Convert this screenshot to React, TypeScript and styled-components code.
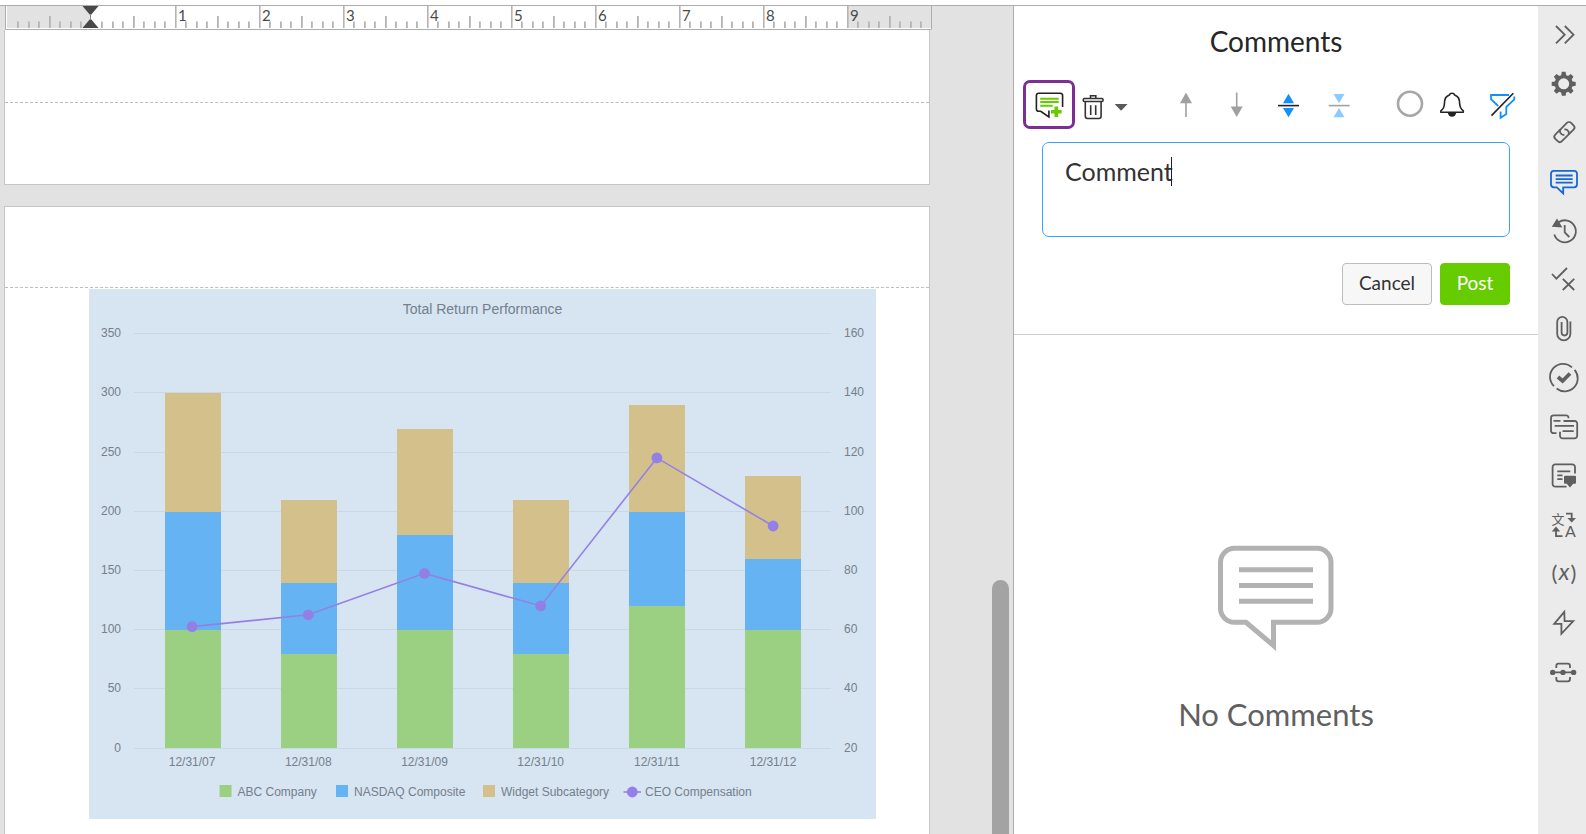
import React from "react";
import styled, { createGlobalStyle } from "styled-components";

const GlobalStyle = createGlobalStyle`
  * { box-sizing: border-box; }
  body {
    margin: 0;
    background: #fff;
    font-family: Lato, "Noto Sans CJK SC", sans-serif;
    color: #333;
  }
  button { font: inherit; color: inherit; }
`;

const Shell = styled.div`
  display: flex;
  height: 100vh;
  padding-top: 5px;
  overflow: hidden;
`;

const Workspace = styled.div`
  flex: 1;
  display: flex;
  min-width: 0;
  border-top: 1px solid #adadad;
  background: #e2e2e2;
`;

const Document = styled.main`
  flex: 1;
  min-width: 0;
  display: flex;
  flex-direction: column;
  padding-left: 4px;
  overflow: hidden;
`;

const RulerBar = styled.svg`
  flex: none;
  display: block;
  width: 927px;
  height: 24px;
  margin-left: 1px;
`;

const Sheet = styled.section<{ $fill?: boolean }>`
  flex: ${(p) => (p.$fill ? "1 0 auto" : "none")};
  width: 926px;
  background: #fff;
  border: 1px solid #c6c6c6;
  border-width: ${(p) => (p.$fill ? "1px 1px 0" : "0 1px 1px")};
  margin-bottom: ${(p) => (p.$fill ? "0" : "21px")};
`;

const Margin = styled.div<{ $h: number; $rule?: boolean }>`
  height: ${(p) => p.$h}px;
  border-bottom: ${(p) => (p.$rule ? "1px dashed #bdbdbd" : "none")};
`;

const Figure = styled.figure`
  margin: 1px 0 0 84px;
  width: 787px;
  background: #d7e4f1;
  svg { display: block; }
`;

const Track = styled.div`
  flex: none;
  width: 21px;
  padding: 574px 4px 0 0;
  display: flex;
`;

const Thumb = styled.div`
  flex: 1;
  background: #a3a3a3;
  border-radius: 9px 9px 0 0;
`;

const Panel = styled.aside`
  flex: none;
  width: 525px;
  display: flex;
  flex-direction: column;
  border-top: 1px solid #adadad;
  border-left: 1px solid #adadad;
  background: #fff;
`;

const PanelTitle = styled.h1`
  margin: 0;
  padding: 17px 0 21px;
  font-size: 28px;
  line-height: 36px;
  font-weight: 400;
  text-align: center;
  color: #262626;
`;

const Toolbar = styled.div`
  display: flex;
  justify-content: space-between;
  height: 49px;
  padding: 0 20px 0 9px;
`;

const ToolGroup = styled.div<{ $gap: number }>`
  display: flex;
  gap: ${(p) => p.$gap}px;
`;

const ToolButton = styled.button<{ $w?: number; $active?: boolean }>`
  width: ${(p) => p.$w ?? 32}px;
  height: 49px;
  padding: 0;
  background: none;
  border: ${(p) => (p.$active ? "3px solid #7b2e94" : "none")};
  border-radius: 7px;
  svg { display: block; }
`;

const Composer = styled.form`
  padding: 13px 28px 29px;
  border-bottom: 1px solid #cecece;
`;

const Field = styled.div`
  position: relative;
  height: 95px;
`;

const CommentInput = styled.textarea`
  display: block;
  width: 100%;
  height: 95px;
  padding: 13px 22px;
  border: 1px solid #36a3ff;
  border-radius: 7px;
  outline: none;
  resize: none;
  background: #fff;
  color: #333;
  font: 25px/30px Lato, sans-serif;
`;

const Caret = styled.span`
  position: absolute;
  left: 129px;
  top: 15px;
  width: 1px;
  height: 29px;
  background: #222;
`;

const Actions = styled.div`
  display: flex;
  justify-content: flex-end;
  gap: 8px;
  margin-top: 26px;
`;

const ActionButton = styled.button<{ $primary?: boolean }>`
  width: ${(p) => (p.$primary ? 70 : 90)}px;
  height: 42px;
  padding: 0 0 2px;
  border: 1px solid ${(p) => (p.$primary ? "#66cc00" : "#bdbdbd")};
  border-radius: 4px;
  background: ${(p) => (p.$primary ? "#66cc00" : "#f7f7f7")};
  color: ${(p) => (p.$primary ? "#fff" : "#333")};
  font-size: 19px;
  line-height: 24px;
`;

const Empty = styled.div`
  flex: 1;
  display: flex;
  flex-direction: column;
  align-items: center;
  padding-top: 210px;
`;

const EmptyText = styled.p`
  margin: 42px 0 0;
  font-size: 31px;
  line-height: 40px;
  color: #606060;
`;

const Rail = styled.nav`
  flex: none;
  width: 48px;
  padding-top: 5px;
  border-top: 1px solid #adadad;
  background: #ebebeb;
  display: flex;
  flex-direction: column;
`;

const RailButton = styled.button<{ $active?: boolean }>`
  height: 49px;
  padding: 0;
  border: 0;
  background: none;
  color: ${(p) => (p.$active ? "#1769d2" : "#5f5f5f")};
  svg { display: block; }
`;

/* ---------- ruler ---------- */

const UNIT = 84;
const ORIGIN = 86;

function Ruler() {
  const ticks: React.ReactNode[] = [];
  for (let n = -7; n <= 79; n++) {
    if (n === 0) continue;
    const major = n % 8 === 0;
    const half = n % 4 === 0;
    const y = major ? 0 : half ? 10 : 15.5;
    ticks.push(
      <rect
        key={n}
        x={Math.floor(ORIGIN + (n * UNIT) / 8)}
        y={y}
        width={major ? 1.6 : 1.8}
        height={22 - y}
        fill="#b4b4b4"
      />
    );
  }
  return (
    <RulerBar viewBox="0 0 927 24" role="img" aria-label="Ruler">
      <rect width="927" height="24" fill="#fff" />
      <rect x="2" y="0" width="84" height="22" fill="#e2e2e2" />
      <rect x="842" y="0" width="84" height="22" fill="#e2e2e2" />
      {ticks}
      {[1, 2, 3, 4, 5, 6, 7, 8, 9].map((n) => (
        <text key={n} x={ORIGIN + n * UNIT + 3} y="15" fontSize="15" fill="#4a4a4a">
          {n}
        </text>
      ))}
      <path d="M77.500 0H93.500L85.500 9.500ZM77.500 22H93.500L85.500 12.500Z" fill="#484848" />
      <path d="M85.500 8V14" stroke="#888" />
      <path d="M0.500 0V23.500H926.500V0" fill="none" stroke="#adadad" />
    </RulerBar>
  );
}

/* ---------- chart ---------- */

const BASE = 459;
const STEP = 59.2;
const COL = 116.2;
const LEFT = 45;

const series = [
  { label: "12/31/07", stack: [100, 100, 100], ceo: 61 },
  { label: "12/31/08", stack: [80, 60, 70], ceo: 65 },
  { label: "12/31/09", stack: [100, 80, 90], ceo: 79 },
  { label: "12/31/10", stack: [80, 60, 70], ceo: 68 },
  { label: "12/31/11", stack: [120, 80, 90], ceo: 118 },
  { label: "12/31/12", stack: [100, 60, 70], ceo: 95 },
];
const fills = ["#9bd083", "#65b3f2", "#d4c08a"];
const legend = [
  { name: "ABC Company", x: 130.5 },
  { name: "NASDAQ Composite", x: 247 },
  { name: "Widget Subcategory", x: 394 },
];

function Chart() {
  const yOf = (v: number) => BASE - (v * STEP) / 50;
  const pts = series.map((s, i) => [LEFT + COL / 2 + i * COL, BASE - ((s.ceo - 20) * STEP) / 20]);
  return (
    <svg width="787" height="530" viewBox="0 0 787 530" fontFamily='"Liberation Sans", Arial, sans-serif' fontSize="12" fill="#74808c" role="img" aria-label="Total Return Performance">
      <text x="393.500" y="25" fontSize="14" textAnchor="middle">Total Return Performance</text>
      {[0, 1, 2, 3, 4, 5, 6, 7].map((k) => {
        const y = Math.floor(BASE - k * STEP);
        return (
          <g key={k}>
            <path d={`M${LEFT} ${y + 0.5}H742`} stroke="#cad8e5" />
            <text x="32" y={y + 4} textAnchor="end">{k * 50}</text>
            <text x="755" y={y + 4}>{20 + k * 20}</text>
          </g>
        );
      })}
      {series.map((s, i) => {
        let acc = 0;
        return (
          <g key={s.label}>
            {s.stack.map((v, j) => {
              const y0 = Math.ceil(yOf(acc));
              acc += v;
              const y1 = Math.ceil(yOf(acc));
              return <rect key={j} x={76 + i * 116} y={y1} width="56" height={y0 - y1} fill={fills[j]} />;
            })}
            <text x={pts[i][0]} y="477" textAnchor="middle">{s.label}</text>
          </g>
        );
      })}
      <polyline points={pts.map((p) => p.join(",")).join(" ")} fill="none" stroke="#9380e6" strokeWidth="1.6" />
      {pts.map((p, i) => (
        <circle key={i} cx={p[0]} cy={p[1]} r="5.400" fill="#9380e6" />
      ))}
      {legend.map((l, i) => (
        <g key={l.name}>
          <rect x={l.x} y="496" width="12" height="12" fill={fills[i]} />
          <text x={l.x + 18} y="507">{l.name}</text>
        </g>
      ))}
      <path d="M534.500 503H552" stroke="#9380e6" strokeWidth="1.600" />
      <circle cx="543.300" cy="503" r="5.400" fill="#9380e6" />
      <text x="556" y="507">CEO Compensation</text>
    </svg>
  );
}

/* ---------- rail icons, drawn on a 48 x 49 cell ---------- */

const gearTeeth = [0, 45, 90, 135, 180, 225, 270, 315];

const railItems: { name: string; active?: boolean; art: React.ReactNode }[] = [
  { name: "Collapse panel", art: <path d="M18 15L26.700 23.700L18 32.400M26.800 15L35.500 23.700L26.800 32.400" /> },
  {
    name: "Settings",
    art: (
      <g transform="translate(25.700 23.800)">
        <circle r="7.300" strokeWidth="3.600" />
        {gearTeeth.map((a) => (
          <path key={a} d="M-2.600 -8L-1.900 -12H1.900L2.600 -8Z" transform={`rotate(${a})`} fill="currentColor" stroke="none" />
        ))}
      </g>
    ),
  },
  {
    name: "Links",
    art: (
      <g transform="translate(26.400 23.100) rotate(-45)">
        <path d="M-1 -4.700H-8.200A3 3 0 0 0 -11.200 -1.700V1.700A3 3 0 0 0 -8.200 4.700H0.400A3 3 0 0 0 3.400 1.700V0.200A2.600 2.600 0 0 0 1.800 -1.800" />
        <path d="M1 4.700H8.200A3 3 0 0 0 11.200 1.700V-1.700A3 3 0 0 0 8.200 -4.700H-0.400A3 3 0 0 0 -3.400 -1.700V-0.200A2.600 2.600 0 0 0 -1.800 1.800" />
      </g>
    ),
  },
  {
    name: "Comments",
    active: true,
    art: (
      <path d="M16 12.800H36A3 3 0 0 1 39 15.800V26.300A3 3 0 0 1 36 29.300H25.200V35.500L18.800 29.300H16A3 3 0 0 1 13 26.300V15.800A3 3 0 0 1 16 12.800ZM17.700 17.500H34.700M17.700 21.100H34.700M17.700 24.700H34.700" />
    ),
  },
  {
    name: "History",
    art: (
      <>
        <path d="M20.500 15.300A11 11 0 1 1 16.300 27.500M26.700 18V25.300L31.300 30" />
        <path d="M19 11.500L24.400 20.400L13.800 19.700Z" fill="currentColor" stroke="none" />
      </>
    ),
  },
  { name: "Review", art: <path d="M14 18L18.400 22.600L29 12M24.800 22.800L36.200 34M36.200 22.800L24.800 34" /> },
  {
    name: "Attachments",
    art: <path d="M32.400 16.500V28.700A6.600 6.600 0 0 1 19.200 28.700V17A5.100 5.100 0 0 1 29.400 17V27.600A2.900 2.900 0 0 1 23.600 27.600V17" />,
  },
  {
    name: "Certify",
    art: (
      <>
        <path d="M34 13.400A13 13 0 0 0 16 32.200M18.600 34.500A13 13 0 0 0 36.600 15.900" />
        <path d="M20 23L24.600 27L32 19.500" strokeWidth="3.800" />
      </>
    ),
  },
  {
    name: "Linked text",
    art: (
      <path d="M30.500 15.200V14.500A2.500 2.500 0 0 0 28 12.300H15.600A2.500 2.500 0 0 0 13 14.800V27.700A2.500 2.500 0 0 0 15.600 30.200H18.500M25.500 18H36.500A2.600 2.600 0 0 1 39.200 20.600V32.700A2.600 2.600 0 0 1 36.500 35.300H24.600A2.600 2.600 0 0 1 22 32.700V28.700M15.500 17.900H22.500M16.700 22.900H36M24.500 28.100H35.700" />
    ),
  },
  {
    name: "Notes",
    art: (
      <>
        <path d="M37 21.500V15A2.700 2.700 0 0 0 34.300 12.300H17.300A2.700 2.700 0 0 0 14.600 15V32A2.700 2.700 0 0 0 17.300 34.700H28.500M19.300 19.300H32.300M19.300 23.300H24.500M19.300 27.100H24.500" />
        <path d="M27 23.700H37A1 1 0 0 1 38 24.700V30.700A1 1 0 0 1 37 31.700H35.200L32 35.400L28.800 31.700H27A1 1 0 0 1 26 30.700V24.700A1 1 0 0 1 27 23.700Z" fill="currentColor" stroke="none" />
      </>
    ),
  },
  {
    name: "Translate",
    art: (
      <>
        <g fill="currentColor" stroke="none">
          <text x="13.500" y="23" fontSize="13" fontFamily="'Noto Sans CJK SC', sans-serif">文</text>
          <text x="27" y="36" fontSize="16" fontFamily="Lato, sans-serif">A</text>
          <path d="M29.400 17H38L33.700 21.600ZM13.800 30.400H22.200L18 25.600Z" />
        </g>
        <path d="M28 12.600H33.700V18M18 29.500V35.200H24.500" />
      </>
    ),
  },
  {
    name: "Variables",
    art: (
      <g fill="currentColor" stroke="none" fontFamily="Lato, sans-serif" textAnchor="middle">
        <text x="16.500" y="30.500" fontSize="22">(</text>
        <text x="26" y="30" fontSize="23" fontStyle="italic">x</text>
        <text x="35.500" y="30.500" fontSize="22">)</text>
      </g>
    ),
  },
  { name: "Actions", art: <path d="M26.300 12.800L16.200 24.800H23.400V34.800L35.200 22.200H26.600Z" /> },
  {
    name: "Section break",
    art: (
      <>
        <path d="M14.700 24.400H36M18.300 20V18A2.300 2.300 0 0 1 20.600 15.700H29.700A2.300 2.300 0 0 1 32 18V20M18.300 29V31A2.300 2.300 0 0 0 20.600 33.300H29.700A2.300 2.300 0 0 0 32 31V29" />
        <g fill="currentColor" stroke="none">
          <circle cx="14.700" cy="24.400" r="2.700" />
          <circle cx="25" cy="24.400" r="2.700" />
          <circle cx="35.600" cy="24.400" r="2.700" />
        </g>
      </>
    ),
  },
];

/* ---------- toolbar icons ---------- */

const Glyph = ({ w = 32, h = 49, children }: { w?: number; h?: number; children: React.ReactNode }) => (
  <svg width={w} height={h} viewBox={`0 0 ${w} ${h}`} fill="none" aria-hidden="true">
    {children}
  </svg>
);

function CommentTools() {
  return (
    <Toolbar role="toolbar" aria-label="Comment tools">
      <ToolGroup $gap={0}>
        <ToolButton $w={52} $active aria-label="Add comment">
          <Glyph w={46} h={43}>
            <path d="M36.600 24V12.400A2.200 2.200 0 0 0 34.400 10.200H12.600A2.200 2.200 0 0 0 10.400 12.400V26A2.200 2.200 0 0 0 12.600 28.300H14.700L22.900 34V27.500" stroke="#222" strokeWidth="1.600" />
            <path d="M14.200 15.700H32.700M14.200 19.100H32.700M14.200 22.700H26.700" stroke="#66cc00" strokeWidth="2" />
            <path d="M30.300 23.500V34M25 28.700H35.600" stroke="#66cc00" strokeWidth="3.600" />
          </Glyph>
        </ToolButton>
        <ToolButton $w={34} aria-label="Delete comment">
          <Glyph w={34}>
            <path d="M9.300 18.500H27A1 1 0 0 1 28 19.500V20.500A1 1 0 0 1 27 21.500H9.300A1 1 0 0 1 8.300 20.500V19.500A1 1 0 0 1 9.300 18.500ZM15.500 18.500V15.700H20.800V18.500M10.300 21.500V36.300A2.200 2.200 0 0 0 12.500 38.500H23.900A2.200 2.200 0 0 0 26.100 36.300V21.500M15.700 25.300V35M20.700 25.300V35" stroke="#333" strokeWidth="1.600" />
          </Glyph>
        </ToolButton>
        <ToolButton $w={22} aria-label="Delete options">
          <Glyph w={22}>
            <path d="M5.600 24H18.600L12.100 30.800Z" fill="#5a5a5a" />
          </Glyph>
        </ToolButton>
      </ToolGroup>
      <ToolGroup $gap={19}>
        <ToolButton aria-label="Previous comment">
          <Glyph>
            <path d="M16 12.500L22 23.300H10Z" fill="#a0a0a0" />
            <path d="M16 20V37" stroke="#a0a0a0" strokeWidth="1.600" />
          </Glyph>
        </ToolButton>
        <ToolButton aria-label="Next comment">
          <Glyph>
            <path d="M15.700 36.900L21.700 26.600H9.700Z" fill="#a0a0a0" />
            <path d="M15.700 12.500V28" stroke="#a0a0a0" strokeWidth="1.600" />
          </Glyph>
        </ToolButton>
        <ToolButton aria-label="Expand all">
          <Glyph>
            <path d="M16.500 13.800L22 23.300H11ZM16.500 37.200L22 28H11Z" fill="#0f90ff" />
            <path d="M6 25.600H27" stroke="#222" strokeWidth="1.600" />
          </Glyph>
        </ToolButton>
        <ToolButton aria-label="Collapse all">
          <Glyph>
            <path d="M16 23.300L21.500 13.900H10.500ZM16 28L21.500 37.200H10.500Z" fill="#8ccbff" />
            <path d="M5.700 25.600H26.700" stroke="#a3a3a3" strokeWidth="1.600" />
          </Glyph>
        </ToolButton>
      </ToolGroup>
      <ToolGroup $gap={14}>
        <ToolButton aria-label="Status">
          <Glyph>
            <circle cx="16" cy="23.700" r="12" stroke="#a6a6a6" strokeWidth="2.600" />
          </Glyph>
        </ToolButton>
        <ToolButton aria-label="Notifications">
          <Glyph>
            <path d="M0.800 32.300H23.300V30.800C20.800 29.200 20 27.800 19.700 24C19.500 18.500 18.500 16.500 14.600 15C14 12.700 10 12.700 9.400 15C5.500 16.500 4.600 18.500 4.400 24C4.200 27.800 3.300 29.200 0.800 30.800Z" stroke="#222" strokeWidth="1.600" strokeLinejoin="round" />
            <path d="M7.800 32.500H16.200A4.200 4.200 0 0 1 7.800 32.500Z" fill="#222" />
          </Glyph>
        </ToolButton>
        <ToolButton aria-label="Filter">
          <Glyph>
            <path d="M23 15H5V19.200L12.200 26M28.300 16.500V19.300L20.300 27V34L14.600 37.800V31.500" stroke="#1090ff" strokeWidth="1.800" />
            <path d="M5.500 35.600L27.300 13.300" stroke="#222" strokeWidth="1.600" />
          </Glyph>
        </ToolButton>
      </ToolGroup>
    </Toolbar>
  );
}

export default function App() {
  return (
    <>
      <GlobalStyle />
      <Shell>
        <Workspace>
          <Document>
            <Ruler />
            <Sheet>
              <Margin $h={73} $rule />
              <Margin $h={81} />
            </Sheet>
            <Sheet $fill>
              <Margin $h={81} $rule />
              <Figure>
                <Chart />
              </Figure>
            </Sheet>
          </Document>
          <Track>
            <Thumb />
          </Track>
        </Workspace>
        <Panel>
          <PanelTitle>Comments</PanelTitle>
          <CommentTools />
          <Composer onSubmit={(e) => e.preventDefault()}>
            <Field>
              <CommentInput aria-label="Comment text" defaultValue="Comment" spellCheck={false} />
              <Caret />
            </Field>
            <Actions>
              <ActionButton type="button">Cancel</ActionButton>
              <ActionButton type="submit" $primary>Post</ActionButton>
            </Actions>
          </Composer>
          <Empty>
            <Glyph w={116} h={107}>
              <path d="M16.500 3.300H99A14 14 0 0 1 113 17.300V63.300A14 14 0 0 1 99 77.300H55.500V100.500L28 77.300H16.500A14 14 0 0 1 2.500 63.300V17.300A14 14 0 0 1 16.500 3.300ZM21 24.700H95M21 40.500H95M21 56.200H95" stroke="#b2b2b2" strokeWidth="5" />
            </Glyph>
            <EmptyText>No Comments</EmptyText>
          </Empty>
        </Panel>
        <Rail aria-label="Panels">
          {railItems.map((item) => (
            <RailButton key={item.name} $active={item.active} aria-label={item.name}>
              <svg width="48" height="49" viewBox="0 0 48 49" fill="none" stroke="currentColor" strokeWidth="1.800" aria-hidden="true">
                {item.art}
              </svg>
            </RailButton>
          ))}
        </Rail>
      </Shell>
    </>
  );
}
